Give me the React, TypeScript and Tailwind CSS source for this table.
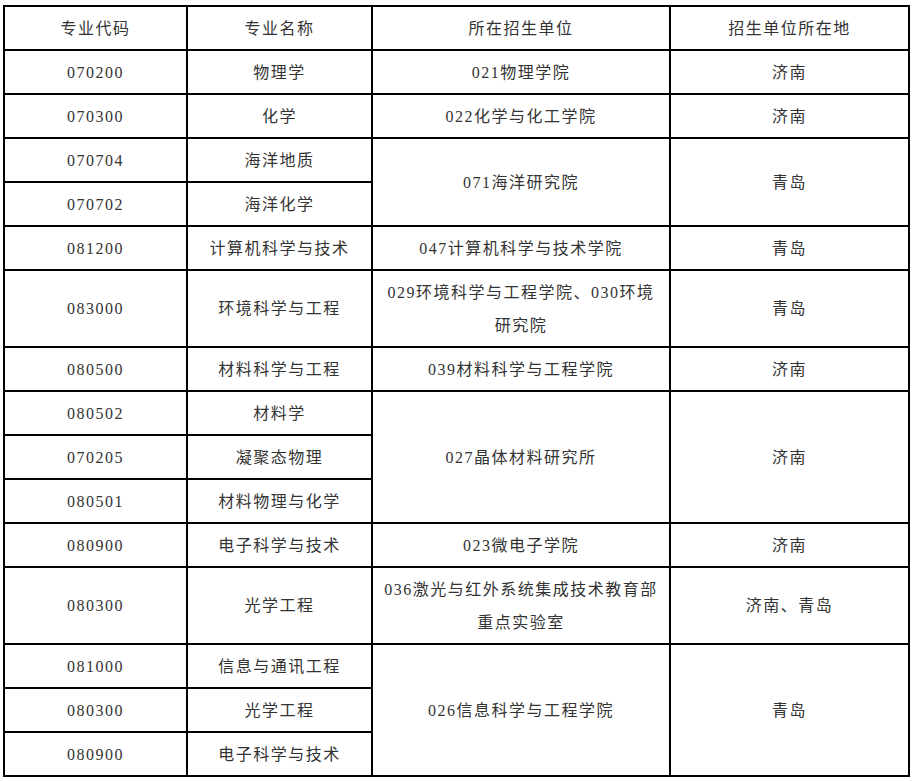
import React from "react";

type Row = {
  code: string;
  name: string;
  unit?: { lines: string[]; span: number };
  city?: { text: string; span: number };
  tall?: boolean;
};

const rows: Row[] = [
  { code: "070200", name: "物理学", unit: { lines: ["021物理学院"], span: 1 }, city: { text: "济南", span: 1 } },
  { code: "070300", name: "化学", unit: { lines: ["022化学与化工学院"], span: 1 }, city: { text: "济南", span: 1 } },
  { code: "070704", name: "海洋地质", unit: { lines: ["071海洋研究院"], span: 2 }, city: { text: "青岛", span: 2 } },
  { code: "070702", name: "海洋化学" },
  { code: "081200", name: "计算机科学与技术", unit: { lines: ["047计算机科学与技术学院"], span: 1 }, city: { text: "青岛", span: 1 } },
  {
    code: "083000",
    name: "环境科学与工程",
    unit: { lines: ["029环境科学与工程学院、030环境", "研究院"], span: 1 },
    city: { text: "青岛", span: 1 },
    tall: true,
  },
  { code: "080500", name: "材料科学与工程", unit: { lines: ["039材料科学与工程学院"], span: 1 }, city: { text: "济南", span: 1 } },
  { code: "080502", name: "材料学", unit: { lines: ["027晶体材料研究所"], span: 3 }, city: { text: "济南", span: 3 } },
  { code: "070205", name: "凝聚态物理" },
  { code: "080501", name: "材料物理与化学" },
  { code: "080900", name: "电子科学与技术", unit: { lines: ["023微电子学院"], span: 1 }, city: { text: "济南", span: 1 } },
  {
    code: "080300",
    name: "光学工程",
    unit: { lines: ["036激光与红外系统集成技术教育部", "重点实验室"], span: 1 },
    city: { text: "济南、青岛", span: 1 },
    tall: true,
  },
  { code: "081000", name: "信息与通讯工程", unit: { lines: ["026信息科学与工程学院"], span: 3 }, city: { text: "青岛", span: 3 } },
  { code: "080300", name: "光学工程" },
  { code: "080900", name: "电子科学与技术" },
];

const cell = "border-2 border-black text-center align-middle px-1 py-[4px] leading-[33px]";

export default function App() {
  return (
    <div
      className="w-[913px] h-[781px] bg-white pt-[5px] pl-[3px] text-[16px] tracking-[1.5px] text-[#333]"
      style={{ fontFamily: '"Liberation Serif", "Noto Sans CJK SC", serif' }}
    >
      <table className="table-fixed border-collapse w-[905px]">
        <colgroup>
          <col className="w-[183px]" />
          <col className="w-[185px]" />
          <col className="w-[298px]" />
          <col className="w-[239px]" />
        </colgroup>
        <thead>
          <tr className="h-[44px]">
            <th className={`${cell} font-normal`}>专业代码</th>
            <th className={`${cell} font-normal`}>专业名称</th>
            <th className={`${cell} font-normal`}>所在招生单位</th>
            <th className={`${cell} font-normal`}>招生单位所在地</th>
          </tr>
        </thead>
        <tbody>
          {rows.map((r, i) => (
            <tr key={i} className={r.tall ? "h-[77px]" : "h-[44px]"}>
              <td className={cell}>{r.code}</td>
              <td className={cell}>{r.name}</td>
              {r.unit && (
                <td className={cell} rowSpan={r.unit.span}>
                  {r.unit.lines.map((l, j) => (
                    <div key={j}>{l}</div>
                  ))}
                </td>
              )}
              {r.city && (
                <td className={cell} rowSpan={r.city.span}>
                  {r.city.text}
                </td>
              )}
            </tr>
          ))}
        </tbody>
      </table>
    </div>
  );
}
